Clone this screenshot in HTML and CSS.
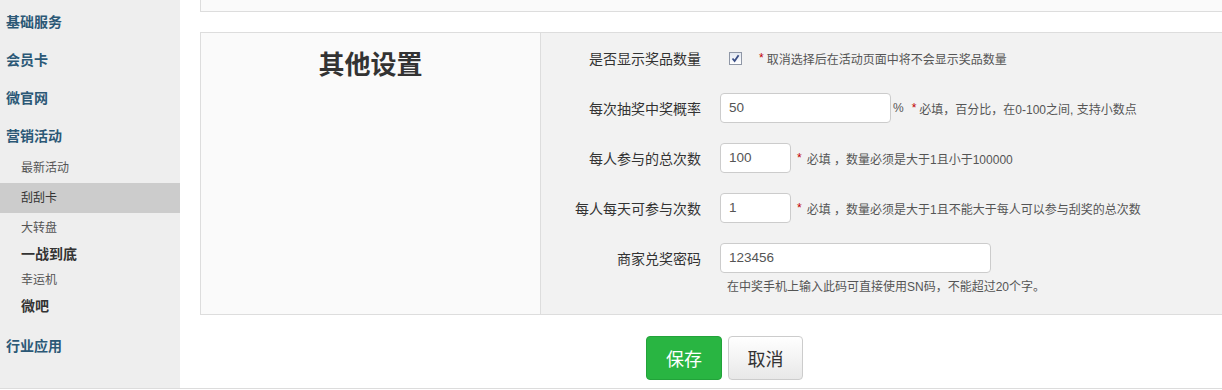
FILE: index.html
```html
<!DOCTYPE html>
<html lang="zh-CN">
<head>
<meta charset="utf-8">
<title>其他设置</title>
<link rel="stylesheet" href="styles.css">
</head>
<body>
<div class="page">
  <aside class="sidebar">
    <div class="nav-main">基础服务</div>
    <div class="nav-main">会员卡</div>
    <div class="nav-main">微官网</div>
    <div class="nav-main">营销活动</div>
    <div class="nav-sub">最新活动</div>
    <div class="nav-sub active">刮刮卡</div>
    <div class="nav-sub spaced">大转盘</div>
    <div class="nav-sub strong">一战到底</div>
    <div class="nav-sub">幸运机</div>
    <div class="nav-sub strong">微吧</div>
    <div class="nav-main last">行业应用</div>
  </aside>
  <main class="content">
    <div class="panel-top"></div>
    <section class="panel">
      <div class="panel-head"><h2>其他设置</h2></div>
      <div class="panel-body">
        <div class="row">
          <label class="label">是否显示奖品数量</label>
          <div class="ctrl">
            <span class="check"><svg width="11" height="11" viewBox="0 0 11 11"><path d="M2.5 5.5 L4.6 8 L8.6 2.2" fill="none" stroke="#3b4f86" stroke-width="1.8"/></svg></span>
            <span class="req">*</span><span class="note">取消选择后在活动页面中将不会显示奖品数量</span>
          </div>
        </div>
        <div class="row">
          <label class="label">每次抽奖中奖概率</label>
          <div class="ctrl">
            <span class="input w171">50</span>
            <span class="pct">%</span><span class="req">*</span><span class="note">必填，百分比，在0-100之间, 支持小数点</span>
          </div>
        </div>
        <div class="row">
          <label class="label">每人参与的总次数</label>
          <div class="ctrl">
            <span class="input w71">100</span>
            <span class="req gap">*</span><span class="note">必填 ，数量必须是大于1且小于100000</span>
          </div>
        </div>
        <div class="row">
          <label class="label">每人每天可参与次数</label>
          <div class="ctrl">
            <span class="input w71">1</span>
            <span class="req gap">*</span><span class="note">必填 ，数量必须是大于1且不能大于每人可以参与刮奖的总次数</span>
          </div>
        </div>
        <div class="row last">
          <label class="label">商家兑奖密码</label>
          <div class="ctrl">
            <span class="input w271">123456</span>
          </div>
        </div>
        <div class="help">在中奖手机上输入此码可直接使用SN码，不能超过20个字。</div>
      </div>
    </section>
    <div class="actions">
      <button class="btn btn-save" type="button">保存</button>
      <button class="btn btn-cancel" type="button">取消</button>
    </div>
  </main>
</div>
</body>
</html>
```
FILE: styles.css
```css
html, body {
  margin: 0;
  padding: 0;
  background: #fff;
  overflow: hidden;
}
body {
  font-family: "Liberation Sans", "Noto Sans CJK SC", sans-serif;
  color: #333;
}
.page {
  display: flex;
  height: 388px;
  border-bottom: 1px solid #dcdcdc;
  width: 1260px;
}
.sidebar {
  width: 180px;
  flex: none;
  background: #eeeeee;
  padding-top: 3px;
  box-sizing: border-box;
}
.nav-main {
  padding-left: 6px;
  height: 38px;
  line-height: 38px;
  font-size: 14px;
  font-weight: bold;
  color: #2b5876;
}
.nav-main.last {
  margin-top: 8px;
}
.nav-sub {
  padding-left: 21px;
  height: 26px;
  line-height: 26px;
  font-size: 12px;
  color: #555;
}
.nav-sub.active {
  background: #cccccc;
  height: 30px;
  line-height: 30px;
  margin-top: 2px;
  color: #333;
}
.nav-sub.spaced {
  margin-top: 2px;
}
.nav-sub.strong {
  font-size: 14px;
  font-weight: bold;
  color: #333;
}
.content {
  flex: none;
  width: 1049px;
  margin-left: 20px;
}
.panel-top {
  height: 11px;
  border: 1px solid #dddddd;
  border-top: none;
  background: #fafafa;
}
.panel {
  margin-top: 20px;
  display: flex;
  border: 1px solid #dddddd;
  height: 283px;
  box-sizing: border-box;
}
.panel-head {
  width: 339px;
  flex: none;
  background: #fafafa;
  border-right: 1px solid #dddddd;
}
.panel-head h2 {
  margin: 15px 0 0;
  text-align: center;
  font-size: 26px;
  line-height: 34px;
  font-weight: bold;
  color: #333;
}
.panel-body {
  flex: 1;
  background: #f2f2f2;
  padding-top: 10px;
}
.row {
  display: flex;
  align-items: center;
  height: 30px;
  margin-bottom: 20px;
}
.row.last {
  margin-bottom: 0;
}
.label {
  width: 160px;
  flex: none;
  text-align: right;
  font-size: 14px;
  color: #333;
}
.ctrl {
  margin-left: 19px;
  display: flex;
  align-items: center;
}
.check {
  margin-left: 9px;
  width: 11px;
  height: 11px;
  border: 1px solid #8f97a6;
  background: linear-gradient(#e4e9f2, #ffffff);
  display: flex;
  align-items: center;
  justify-content: center;
}
.check svg {
  display: block;
}
.req {
  color: #c00000;
  font-size: 12px;
  margin-left: 17px;
  margin-right: 3px;
}
.req.gap {
  margin-left: 6px;
  margin-right: 5px;
}
.pct {
  font-size: 12px;
  color: #555;
  margin-left: 2px;
}
.pct + .req {
  margin-left: 8px;
  margin-right: 3px;
}
.note {
  font-size: 12px;
  color: #555;
}
.input {
  box-sizing: border-box;
  height: 30px;
  border: 1px solid #cccccc;
  border-radius: 4px;
  background: #fff;
  padding-left: 8px;
  font-size: 13.5px;
  line-height: 28px;
  color: #555;
}
.w171 { width: 171px; }
.w71 { width: 71px; }
.w271 { width: 271px; }
.help {
  margin-left: 186px;
  margin-top: 4px;
  font-size: 12px;
  color: #555;
}
.actions {
  margin-top: 21px;
  display: flex;
  justify-content: center;
  gap: 6px;
}
.btn {
  height: 44px;
  font-family: "Liberation Sans", "Noto Sans CJK SC", sans-serif;
  font-size: 18px;
  border-radius: 4px;
  padding: 0;
}
.btn-save {
  width: 76px;
  background: #29b542;
  border: 1px solid #22a33a;
  color: #fff;
}
.btn-cancel {
  width: 75px;
  background: linear-gradient(#ffffff, #e8e8e8);
  border: 1px solid #cccccc;
  color: #333;
}
```
